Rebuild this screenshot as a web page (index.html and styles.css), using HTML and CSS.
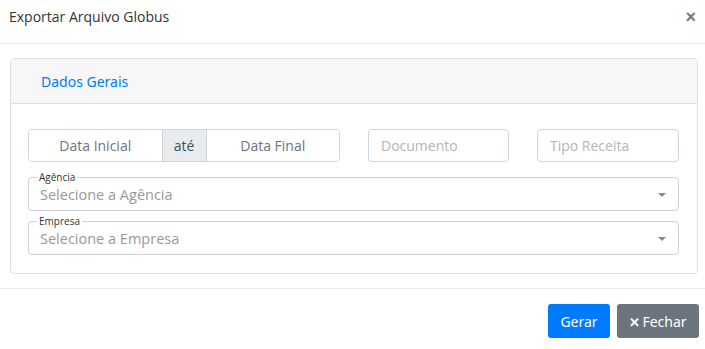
FILE: index.html
```html
<!DOCTYPE html>
<html lang="pt-BR">
<head>
    <meta charset="UTF-8">
    <meta name="viewport" content="width=device-width, initial-scale=1.0">
    <title>Exportar Arquivo Globus</title>
    <link rel="stylesheet" href="styles.css">
</head>
<body>
    <div class="modal">
        <div class="modal-header">
            <h5 class="modal-title">Exportar Arquivo Globus</h5>
            <button type="button" class="close">&times;</button>
        </div>
        <div class="modal-body">
            <div class="card">
                <div class="card-header">
                    <span class="tab">Dados Gerais</span>
                </div>
                <div class="card-body">
                    <div class="row">
                        <div class="input-group">
                            <input type="text" class="date" placeholder="Data Inicial">
                            <span class="addon">até</span>
                            <input type="text" class="date" placeholder="Data Final">
                        </div>
                        <input type="text" class="field" placeholder="Documento">
                        <input type="text" class="field" placeholder="Tipo Receita">
                    </div>
                    <fieldset class="select-box">
                        <legend>Agência</legend>
                        <div class="select-value">Selecione a Agência</div>
                        <span class="arrow"></span>
                    </fieldset>
                    <fieldset class="select-box">
                        <legend>Empresa</legend>
                        <div class="select-value">Selecione a Empresa</div>
                        <span class="arrow"></span>
                    </fieldset>
                </div>
            </div>
        </div>
        <div class="modal-footer">
            <button type="button" class="btn btn-primary">Gerar</button>
            <button type="button" class="btn btn-secondary"><span class="x">&#10005;</span>Fechar</button>
        </div>
    </div>
</body>
</html>
```

FILE: styles.css
```css
* {
    box-sizing: border-box;
}
body {
    margin: 0;
    font-family: "Open Sans", sans-serif;
    color: #212529;
    background: #fff;
}
.modal {
    width: 705px;
}
.modal-header {
    height: 44px;
    display: flex;
    align-items: flex-start;
    justify-content: space-between;
    padding: 7px 9px 0 9px;
    border-bottom: 1px solid #e9ecef;
}
.modal-title {
    margin: 0;
    font-size: 14px;
    font-weight: 400;
    line-height: 20px;
    color: #333;
}
.close {
    border: none;
    background: none;
    padding: 0;
    font-size: 18px;
    line-height: 20px;
    font-weight: 700;
    color: #777;
    cursor: pointer;
    font-family: "Liberation Sans", sans-serif;
}
.modal-body {
    padding: 14px 7px 14px 10px;
}
.card {
    border: 1px solid #e0e0e0;
    border-radius: 4px;
}
.card-header {
    height: 45px;
    background: #f7f7f7;
    border-bottom: 1px solid #dfdfdf;
    padding: 0 30px;
    display: flex;
    align-items: center;
}
.tab {
    font-family: "Noto Sans", sans-serif;
    font-size: 14px;
    color: #007bff;
}
.card-body {
    padding: 25px 18px 18px 17px;
}
.row {
    display: grid;
    grid-template-columns: 312px 141px 142px;
    gap: 28px;
    margin-bottom: 9px;
}
.input-group {
    display: flex;
    height: 33px;
    border: 1px solid #ced4da;
    border-radius: 4px;
    overflow: hidden;
}
.date {
    flex: 1;
    min-width: 0;
    border: none;
    text-align: center;
    font-family: "Open Sans", sans-serif;
    font-size: 14px;
    color: #495057;
    outline: none;
}
.date::placeholder {
    color: #6c757d;
}
.addon {
    width: 45px;
    background: #e9ecef;
    border-left: 1px solid #ced4da;
    border-right: 1px solid #ced4da;
    display: flex;
    align-items: center;
    justify-content: center;
    font-size: 14px;
    color: #495057;
}
.field {
    height: 33px;
    border: 1px solid #ced4da;
    border-radius: 4px;
    padding: 0 12px;
    font-family: "Open Sans", sans-serif;
    font-size: 14px;
    outline: none;
}
.field::placeholder {
    color: #b5b5b5;
}
.select-box {
    position: relative;
    margin: 0 0 4px 0;
    padding: 0 11px 5px 11px;
    border: 1px solid #d0d0d0;
    border-radius: 4px;
    height: 40px;
}
.select-box:last-child {
    margin-bottom: 0;
}
.select-box legend {
    font-size: 10px;
    line-height: 12px;
    padding: 0 2px;
    margin-left: -3px;
    color: #333;
}
.select-value {
    font-size: 14.5px;
    line-height: 23px;
    color: #999;
}
.arrow {
    position: absolute;
    right: 12px;
    top: 10px;
    border-left: 4px solid transparent;
    border-right: 4px solid transparent;
    border-top: 4px solid #888;
}
.modal-footer {
    border-top: 1px solid #e9ecef;
    padding: 15px 6px 11px 0;
    display: flex;
    justify-content: flex-end;
    gap: 7px;
}
.btn {
    height: 34px;
    border: none;
    border-radius: 3px;
    padding: 0 12px;
    font-family: "Noto Sans", sans-serif;
    font-size: 14px;
    color: #fff;
    cursor: pointer;
}
.btn-primary {
    background: #007bff;
    width: 62px;
}
.btn-secondary {
    background: #6c757d;
    width: 82px;
    padding: 0 6px;
}
.x {
    font-weight: 700;
    font-size: 13px;
    margin-right: 2px;
}
```
